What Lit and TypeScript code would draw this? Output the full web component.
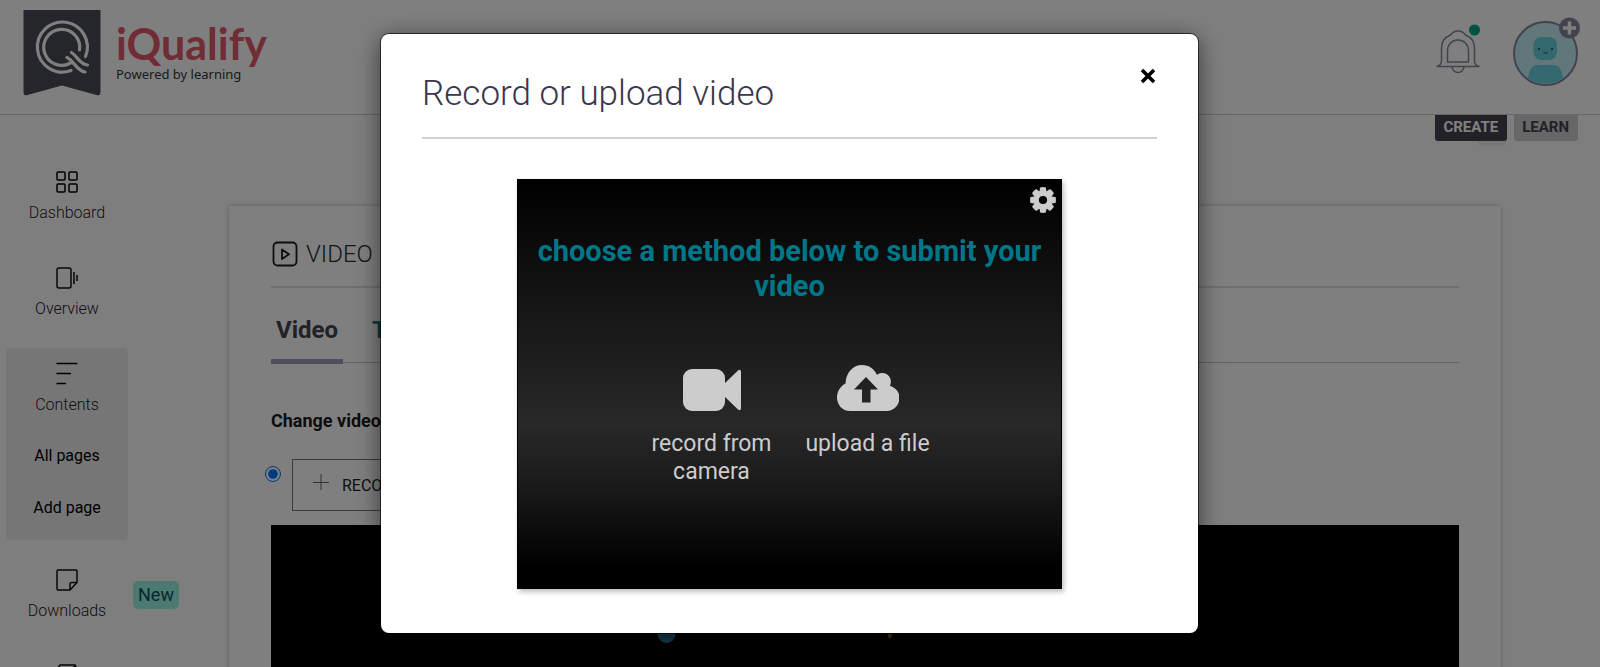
import { LitElement, html, css, svg, nothing } from "lit";
import { customElement } from "lit/decorators.js";

const navIcons = {
  dashboard: svg`<svg viewBox="0 0 24 24" width="24" height="24" fill="none" stroke="#000" stroke-width="1.5">
    <rect x="2" y="2" width="8" height="8" rx="1"/><rect x="14" y="2" width="8" height="8" rx="1"/>
    <rect x="2" y="14" width="8" height="8" rx="1"/><rect x="14" y="14" width="8" height="8" rx="1"/></svg>`,
  overview: svg`<svg viewBox="0 0 24 24" width="24" height="24" fill="none" stroke="#111" stroke-width="1.5">
    <rect x="2" y="2" width="14" height="20" rx="2"/><path d="M19 6v12M22 9v6"/></svg>`,
  contents: svg`<svg viewBox="0 0 24 24" width="24" height="24" fill="none" stroke="#000" stroke-width="1.5">
    <path d="M1.500 1.500h21M1.500 11.500h14.500M1.500 21.500h9.500"/></svg>`,
  downloads: svg`<svg viewBox="0 0 24 24" width="24" height="24" fill="none" stroke="#111" stroke-width="1.500" stroke-linejoin="round">
    <path d="M22 14.500V3a1 1 0 0 0-1-1H3a1 1 0 0 0-1 1v18a1 1 0 0 0 1 1h12l7-7.500h-5.500a1.500 1.500 0 0 0-1.500 1.500v6"/></svg>`,
  more: svg`<svg viewBox="0 0 24 24" width="24" height="24" fill="none" stroke="#111" stroke-width="1.500" stroke-linejoin="round">
    <path d="M2 22V5l3-4h15l-2 4H2M18 5v17M20 1l2 4v17"/></svg>`,
};

const nav = [
  { label: "Dashboard", icon: navIcons.dashboard },
  { label: "Overview", icon: navIcons.overview },
  { label: "Contents", icon: navIcons.contents, children: ["All pages", "Add page"] },
  { label: "Downloads", icon: navIcons.downloads, badge: "New" },
  { label: "", icon: navIcons.more },
];

@customElement("app-header")
class AppHeader extends LitElement {
  static styles = css`
    :host { display: block; }
    .bar { display: flex; justify-content: space-between; height: 114px; border-bottom: 1px solid #cfcfcf; background: #fff; }
    .brand { display: flex; gap: 15px; padding: 10px 0 0 23px; text-decoration: none; }
    .words { padding-top: 12px; }
    .name { display: block; font: 700 43px/44px Lato, sans-serif; color: #e25a6c; }
    .tagline { display: block; font: 400 13px/16px "Noto Sans", sans-serif; color: #33363f; }
    .tools { display: flex; gap: 31px; padding: 16px 20px 0 0; align-items: flex-start; }
    .tool { border: 0; padding: 0; background: none; display: block; }
    .tool svg { display: block; }
  `;
  render() {
    return html`<header class="bar">
      <a class="brand" href="#" aria-label="iQualify">
        <svg width="78" height="86" viewBox="0 0 78 86">
          <path d="M.500 0h77v82q0 4-4 3L39 75.500 4.500 85q-4 1-4-3z" fill="#494c56"/>
          <g fill="none" stroke="#fff" stroke-width="3.200" stroke-linecap="round">
            <path d="M48 60.500A25 25 0 1 1 62.500 46.500"/>
            <path d="M47.500 53A18 18 0 1 1 56.500 40"/>
            <path d="M48.500 42.500C54 46 57 54.500 64.500 55M44 47.500C50 50 54 61 62 62"/>
          </g>
        </svg>
        <span class="words"><span class="name">iQualify</span><span class="tagline">Powered by learning</span></span>
      </a>
      <div class="tools">
        <button class="tool" aria-label="Notifications">
          <svg width="46" height="62" viewBox="0 0 46 62" fill="none" stroke="#84869a" stroke-width="1.500">
            <path d="M1.500 50.500h43q-5-1-5-6V32c0-7-4-11-9-13-2-3-4-4-7.500-4s-5.500 1-7.500 4c-5 2-9 6-9 13v12.500q0 5-5 6"/>
            <path d="M12.500 46V34.500a10.500 10.500 0 0 1 21 0V46z"/>
            <path d="M17 50.500a6 6 0 0 0 12 0"/>
            <circle cx="39.500" cy="14" r="5.500" fill="#00a583" stroke="none"/>
          </svg>
        </button>
        <button class="tool" aria-label="Account">
          <svg width="68" height="72" viewBox="0 0 68 72">
            <circle cx="33.500" cy="37.500" r="31.500" fill="#c4eff5" stroke="#84869a" stroke-width="2"/>
            <rect x="21.500" y="21" width="23.500" height="23" rx="8" fill="#66d0e0"/>
            <path d="M16 62.500c1-8 4-13.500 9-13.500h17c5 0 8 5.500 9 13.500q-17.500 10-35 0z" fill="#66d0e0"/>
            <circle cx="27" cy="33" r="1" fill="#124c58"/><circle cx="40" cy="33" r="1" fill="#124c58"/>
            <path d="M31.500 36q2 3 4 0" fill="none" stroke="#124c58"/>
            <circle cx="57.500" cy="12" r="10.500" fill="#84869a"/>
            <path d="M57.500 5.500v13M51 12h13" stroke="#fff" stroke-width="3.500"/>
          </svg>
        </button>
      </div>
    </header>`;
  }
}

@customElement("app-sidebar")
class AppSidebar extends LitElement {
  static styles = css`
    :host { display: block; width: 229px; flex: none; font-family: Roboto, sans-serif; }
    .list { list-style: none; margin: 0; padding: 41px 0 0 6px; display: grid; gap: 14px; }
    .item { display: flex; align-items: center; gap: 5px; }
    .cell { width: 122px; border-radius: 5px; text-align: center; }
    .open { background: #ededed; padding-bottom: 6px; }
    .link { display: grid; justify-items: center; gap: 7px; padding: 14px 0 13px; color: #222; text-decoration: none; font-size: 16px; line-height: 24px; font-weight: 300; }
    .sub { display: block; color: #000; text-decoration: none; font-size: 16px; line-height: 52px; }
    .badge { background: #98f2e4; color: #12505c; border-radius: 5px; font-size: 18px; line-height: 28px; padding: 0 5px; }
  `;
  render() {
    return html`<nav><ul class="list">${nav.map((n) => html`<li class="item">
      <div class="cell ${n.children ? "open" : ""}">
        <a class="link" href="#" aria-label=${n.label || "More"}>${n.icon}${n.label ? html`<span>${n.label}</span>` : nothing}</a>
        ${n.children?.map((c) => html`<a class="sub" href="#">${c}</a>`) ?? nothing}
      </div>
      ${n.badge ? html`<span class="badge">${n.badge}</span>` : nothing}
    </li>`)}</ul></nav>`;
  }
}

@customElement("video-card")
class VideoCard extends LitElement {
  static styles = css`
    :host { display: block; font-family: Roboto, sans-serif; }
    .card { background: #fff; box-shadow: 0 0 4px rgba(0,0,0,.28); padding: 19px 42px 0; height: 100vh; }
    .heading { display: flex; align-items: center; gap: 7px; margin: 0; height: 58px; padding-bottom: 3px; border-bottom: 2px solid #e0e0e0; font-size: 24px; font-weight: 300; color: #2b2937; }
    .tabs { display: flex; gap: 24px; height: 74px; border-bottom: 1px solid #c4c4c4; align-items: flex-end; }
    .tab { border: 0; border-bottom: 5px solid transparent; background: none; font: 700 24px/32px Roboto, sans-serif; padding: 0 5px 13px; color: #007f80; margin-bottom: -2px; }
    .active { color: #45424f; border-color: #9d9fb5; }
    .label { font-size: 18px; line-height: 24px; font-weight: 700; color: #1a1a1a; margin: 46px 0 26px; }
    .choice { display: flex; align-items: flex-start; gap: 11px; margin-left: -6px; }
    .radio { margin: 7px 0 0; width: 16px; height: 16px; accent-color: #0075ff; }
    .record { display: flex; align-items: center; gap: 13px; height: 52px; padding: 0 20px; border: 1px solid #777; background: #fff; font: 400 16px Roboto, sans-serif; color: #222; }
    .player { background: #000; height: 400px; margin-top: 14px; display: flex; justify-content: center; padding-top: 98px; box-sizing: border-box; }
  `;
  render() {
    return html`<section class="card">
      <h2 class="heading">
        <svg width="28" height="28" viewBox="0 0 28 28" fill="none" stroke="#1a1a1a" stroke-width="1.800" stroke-linejoin="round">
          <rect x="2.500" y="2.500" width="23" height="23" rx="4"/><path d="M11 9.500v9.500l7-4.750z"/></svg>
        VIDEO
      </h2>
      <div class="tabs" role="tablist">
        <button class="tab active" role="tab" aria-selected="true">Video</button>
        <button class="tab" role="tab" aria-selected="false">Transcript</button>
      </div>
      <p class="label">Change video</p>
      <div class="choice">
        <input class="radio" type="radio" name="source" checked aria-label="Record or upload video">
        <button class="record">
          <svg width="16" height="22" viewBox="0 0 16 22" stroke="#666" stroke-width="1"><path d="M8 0v16M0 8.500h16"/></svg>
          RECORD
        </button>
      </div>
      <div class="player">
        <svg width="622" height="24" viewBox="0 0 622 24">
          <circle cx="112.500" cy="11" r="9" fill="#2f7d9d"/><path d="M334 11h4v3l-2 2-2-2z" fill="#8a621c"/></svg>
      </div>
    </section>`;
  }
}

@customElement("record-dialog")
class RecordDialog extends LitElement {
  static styles = css`
    :host { display: block; font-family: Roboto, sans-serif; }
    .dialog { width: min(817px, 100vw); box-sizing: border-box; padding: 0 41px 44px; background: #fff; border-radius: 8px; box-shadow: 0 0 0 1px rgba(0,0,0,.6), 0 5px 25px rgba(0,0,0,.6); }
    .head { display: flex; align-items: center; justify-content: space-between; height: 103px; border-bottom: 2px solid #d0d1dd; }
    .title { margin: 0; padding-top: 16px; font-size: 35px; line-height: 44px; font-weight: 300; color: #3a364b; }
    .close { border: 0; background: none; padding: 0 1px; align-self: flex-start; margin-top: 34px; }
    .close svg, .gear svg { display: block; }
    .recorder { position: relative; box-sizing: border-box; width: min(545px, 100%); height: 410px; margin: 40px auto 0; padding: 54px 16px 0; border: 1px solid #000; text-align: center; background: linear-gradient(#000, #0b0b0b 16%, #1a1a1a 38%, #282828 60%, #1a1a1a 75%, #000 95%); box-shadow: 2px 3px 5px rgba(0,0,0,.25); }
    .gear { position: absolute; top: 7px; right: 5px; border: 0; background: none; padding: 0; }
    .prompt { margin: 0; font-size: 29px; line-height: 35px; font-weight: 700; color: #007789; }
    .methods { display: flex; justify-content: center; gap: 20px; margin-top: 59px; }
    .method { width: 136px; border: 0; padding: 0; background: none; color: #ccc; font: 400 23px/28px Roboto, sans-serif; display: grid; align-content: start; justify-items: center; gap: 17px; }
  `;
  render() {
    const teeth = [0, 45, 90, 135, 180, 225, 270, 315];
    return html`<div class="dialog" role="dialog" aria-modal="true" aria-labelledby="title">
      <div class="head">
        <h1 class="title" id="title">Record or upload video</h1>
        <button class="close" aria-label="Close">
          <svg width="16" height="16" viewBox="0 0 16 16" stroke="#000" stroke-width="3.600"><path d="M2 2l12 12M14 2L2 14"/></svg>
        </button>
      </div>
      <div class="recorder">
        <button class="gear" aria-label="Settings">
          <svg width="26" height="26" viewBox="-13 -13 26 26" fill="#ccc">
            ${teeth.map((a) => svg`<path transform="rotate(${a})" d="M-3.600-8l.700-4.600q2.900-.600 5.800 0l.700 4.600z"/>`)}
            <circle r="6.800" fill="none" stroke="#ccc" stroke-width="5.400"/>
          </svg>
        </button>
        <h2 class="prompt">choose a method below to submit your video</h2>
        <div class="methods">
          <button class="method">
            <svg width="60" height="50" viewBox="0 0 60 50" fill="#ccc">
              <rect x="1" y="6" width="42" height="42" rx="9"/><path d="M42 21L56 7.500q3-2 3 1.500v36q0 3.500-3 1.500L42 33z"/></svg>
            <span>record from camera</span>
          </button>
          <button class="method">
            <svg width="62" height="50" viewBox="0 0 62 50" fill="#ccc" fill-rule="evenodd">
              <path d="M13 48C5 48 0 41.500 0 34.500c0-6 3.500-11.500 8.500-14C9 9.500 16 2 25 2c7 0 12.500 4 15 10 2.500-2.500 6.500-2.500 9.500-1 4 2.200 5.500 7 3.500 11.800 6 2 9.500 6.700 9.500 11.700C62.500 42 57 48 50 48zM29 14L17 26.500h8V39.500h8.500V26.500H41z"/></svg>
            <span>upload a file</span>
          </button>
        </div>
      </div>
    </div>`;
  }
}

@customElement("app-root")
class AppRoot extends LitElement {
  static styles = css`
    :host { display: block; position: relative; height: 100vh; overflow: hidden; background: #fdfdfd; font-family: Roboto, sans-serif; }
    .body { display: flex; }
    .main { flex: 1; min-width: 0; padding-right: 22px; }
    .modes { display: flex; justify-content: flex-end; align-items: flex-start; gap: 7px; height: 91px; }
    .mode { border: 0; background: #cecece; color: #45424f; font: 700 15px/24px Roboto, sans-serif; padding: 0 9px 2px 8px; border-radius: 0 0 3px 3px; text-decoration: none; }
    .on { position: relative; background: #45424f; color: #fff; }
    .on::after { content: ""; position: absolute; top: 100%; right: 0; width: 30px; height: 5px; background: #efefef; border-radius: 0 0 5px 5px; }
    .content { margin-right: 77px; }
    .overlay { position: absolute; inset: 0; background: rgba(0,0,0,.5); display: flex; justify-content: center; align-items: flex-start; padding: 34px 21px 0 0; }
  `;
  render() {
    return html`
      <app-header></app-header>
      <div class="body">
        <app-sidebar></app-sidebar>
        <main class="main">
          <div class="modes"><a class="mode on" href="#">CREATE</a><a class="mode" href="#">LEARN</a></div>
          <video-card class="content"></video-card>
        </main>
      </div>
      <div class="overlay"><record-dialog></record-dialog></div>`;
  }
}
